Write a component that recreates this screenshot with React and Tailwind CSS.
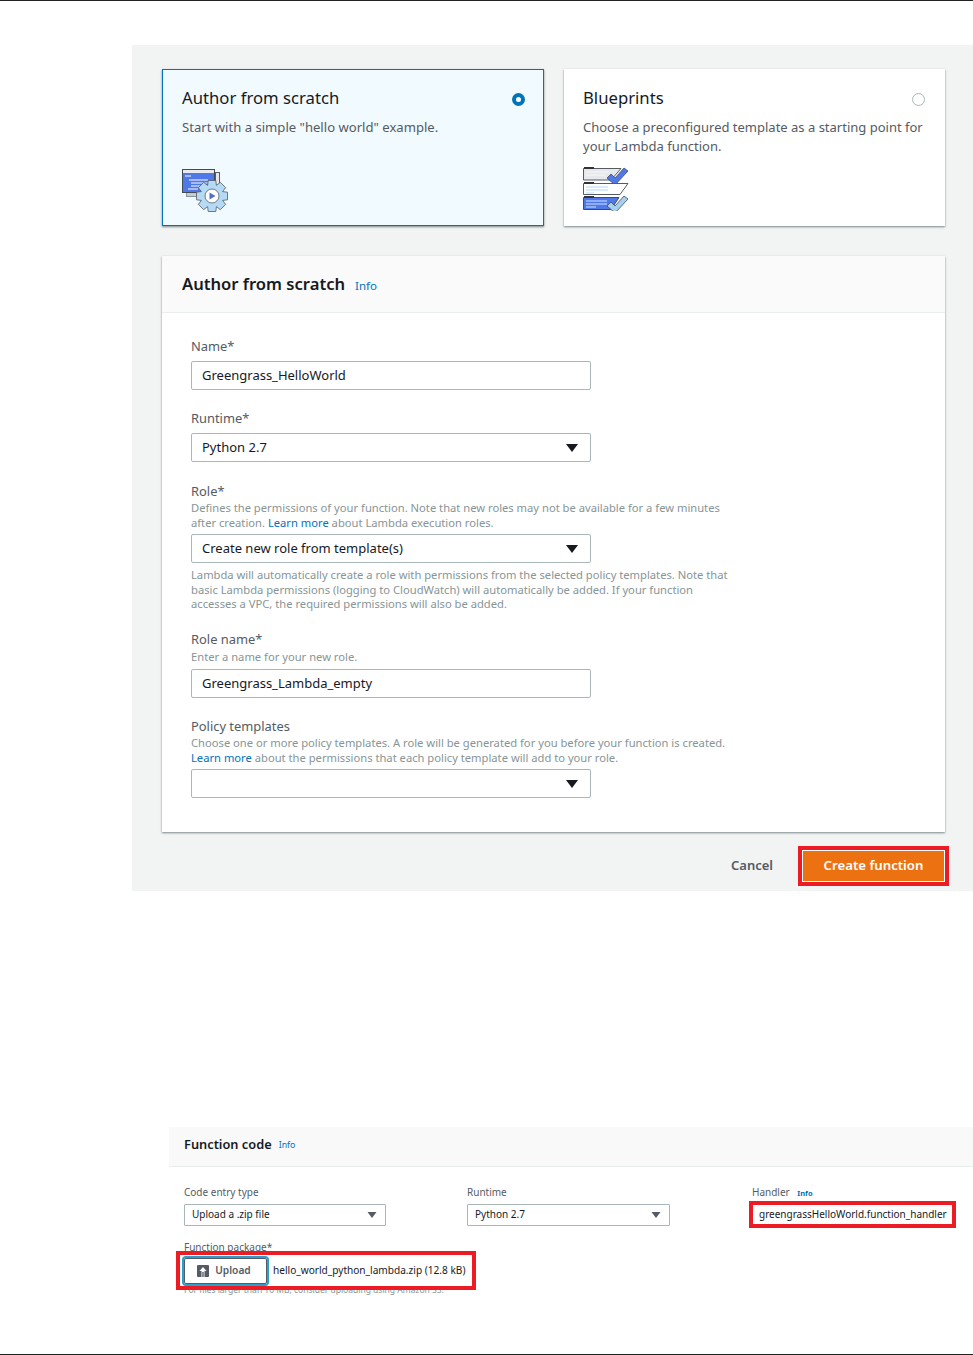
import React from "react";

const FONT = "font-['Noto_Sans','Open_Sans',sans-serif]";

// --- Little helpers ---
const Caret = ({ small }) => (
  <svg width={small ? 10 : 12} height={small ? 6 : 8} viewBox="0 0 12 8" className="shrink-0">
    <path d="M0 0H12L6 8Z" fill={small ? "#545b64" : "#16191f"} />
  </svg>
);

const Field = ({ children, caret }) => (
  <div className="flex h-[29px] w-[400px] items-center justify-between rounded-[2px] border border-[#aab7b8] bg-white pl-[10px] pr-[12px] text-[13px] text-[#16191f]">
    <span>{children}</span>
    {caret && <Caret />}
  </div>
);

const Label = ({ children }) => (
  <div className="text-[12.9px] leading-[16px] text-[#545b64]">{children}</div>
);

const Help = ({ children }) => (
  <p className="text-[11.2px] leading-[14.5px] text-[#879596]">{children}</p>
);

const SmallSelect = ({ children, width }) => (
  <div className={`flex h-[22px] items-center justify-between rounded-[1px] border border-[#aab7b8] bg-white pb-[1px] pl-[7px] pr-[8px] text-[10px] text-[#16191f] ${width}`}>
    <span>{children}</span>
    <Caret small />
  </div>
);

// gear outline for the scratch card icon, 8 teeth round (30,27)
const gearPath = () => {
  const pts = [];
  for (let i = 0; i < 8; i++) {
    const a = (i * Math.PI) / 4;
    [[-0.39, 11.5], [-0.24, 16], [0.24, 16], [0.39, 11.5]].forEach(([d, r]) => {
      pts.push(`${(30 + r * Math.cos(a + d)).toFixed(1)} ${(27 + r * Math.sin(a + d)).toFixed(1)}`);
    });
  }
  return `M${pts.join("L")}Z`;
};

const ScratchIcon = () => (
  <svg width="47" height="44" viewBox="0 0 47 44" className="block">
    <rect x="33.5" y="3.5" width="4" height="14" fill="#e6e8eb" stroke="#545b64" />
    <rect x="4.5" y="23.5" width="20" height="4" fill="#c5ccd2" stroke="#8a9299" />
    <rect x="0.5" y="0.5" width="32" height="23" fill="#4f78e8" stroke="#444b55" />
    <rect x="1" y="1" width="31" height="3" fill="#e8eaec" />
    <path d="M3 7H9M7 11H26M9 14H26M9 17H22M6 20H16" stroke="#fff" strokeWidth="1" />
    <path d={gearPath()} fill="#b5daf5" stroke="#545b64" strokeWidth="0.8" />
    <circle cx="30" cy="27" r="7" fill="#fff" stroke="#545b64" strokeWidth="0.8" />
    <path d="M27.5 23.5v7l6-3.5z" fill="#4f6fc8" />
  </svg>
);

const BlueprintIcon = () => (
  <svg width="47" height="44" viewBox="0 0 47 44" className="block">
    <path d="M0.5 1.5H38L28 13H0.5Z" fill="#e6e8eb" stroke="#545b64" />
    <path d="M1 1H11" stroke="#333" strokeWidth="2" />
    <path d="M3 5H26M3 8H22" stroke="#f6f7f8" />
    <path d="M28 7l4 4 9-10 4 3-13 14-8-7z" fill="#4f78e8" stroke="#3a4a70" strokeWidth="0.8" />
    <path d="M0.5 16.5H45L37 27.5H0.5Z" fill="#fff" stroke="#545b64" />
    <path d="M1 16H11" stroke="#333" strokeWidth="2" />
    <path d="M3 20H25M3 23H25" stroke="#d8edfb" strokeWidth="2" />
    <path d="M3 26H11" stroke="#bcdff7" />
    <path d="M0.5 30.5H36L28 42.5H0.5Z" fill="#4f78e8" stroke="#444b55" />
    <path d="M1 30H11" stroke="#333" strokeWidth="2" />
    <path d="M3 34H24M3 37H24M3 40H13" stroke="#d4e2ff" />
    <path d="M28 35l4 4 9-10 4 3-13 14-8-7z" fill="#a6d0f0" stroke="#444b55" strokeWidth="0.8" />
  </svg>
);

const UploadGlyph = () => (
  <svg width="12" height="12" viewBox="0 0 12 12">
    <rect width="12" height="12" rx="1" fill="#545b64" />
    <path d="M6 2 2.5 6H4.5V12H5.3V7H6.7V12H7.5V6H9.5Z" fill="#fff" />
  </svg>
);

export default function App() {
  return (
    <div className={`${FONT} flex h-[1355px] w-full flex-col justify-between overflow-hidden border-y border-[#222] bg-white`}>
      <div>
        {/* Create function panel */}
        <div className="ml-[132px] mt-[44px] h-[846px] bg-[#f2f3f3] pl-[30px] pr-[28px] pt-[24px]">
          <div className="flex gap-[20px]">
            <div className="relative h-[157px] w-[382px] border border-[#0073bb] bg-[#f1faff] pl-[19px] pt-[16px] shadow-[0_1px_2px_rgba(0,28,36,0.5)]">
              <h2 className="text-[16.7px] leading-[24px] text-[#16191f]">Author from scratch</h2>
              <p className="mt-[8px] text-[13.1px] leading-[19px] text-[#545b64]">Start with a simple "hello world" example.</p>
              <div className="mt-[32px]"><ScratchIcon /></div>
              <span className="absolute right-[18px] top-[23px] flex h-[13px] w-[13px] items-center justify-center rounded-full bg-[#0073bb]">
                <span className="h-[5px] w-[5px] rounded-full bg-white" />
              </span>
            </div>
            <div className="relative h-[157px] w-[381px] bg-white pl-[19px] pt-[17px] shadow-[0_1px_2px_rgba(0,28,36,0.5)]">
              <h2 className="text-[16.7px] leading-[24px] text-[#16191f]">Blueprints</h2>
              <p className="mt-[8px] w-[350px] text-[13px] leading-[19px] text-[#545b64]">Choose a preconfigured template as a starting point for your Lambda function.</p>
              <div className="mt-[11px]"><BlueprintIcon /></div>
              <span className="absolute right-[20px] top-[24px] h-[13px] w-[13px] rounded-full border border-[#aab7b8] bg-white" />
            </div>
          </div>

          {/* Author form */}
          <div className="mt-[30px] h-[576px] w-[783px] bg-white shadow-[0_1px_2px_rgba(0,28,36,0.5)]">
            <div className="flex h-[57px] items-center border-b border-[#eaeded] bg-[#fafafa] pl-[20px]">
              <h3 className="text-[16.6px] font-semibold text-[#16191f]">Author from scratch</h3>
              <a className="ml-[10px] mt-[3px] text-[11.5px] text-[#0073bb]">Info</a>
            </div>
            <div className="pl-[29px] pt-[25px]">
              <Label>Name*</Label>
              <div className="mt-[7px]"><Field>Greengrass_HelloWorld</Field></div>

              <div className="mt-[20px]"><Label>Runtime*</Label></div>
              <div className="mt-[7px]"><Field caret>Python 2.7</Field></div>

              <div className="mt-[21px]"><Label>Role*</Label></div>
              <div className="mt-[2px] w-[542px]">
                <Help>Defines the permissions of your function. Note that new roles may not be available for a few minutes after creation. <span className="text-[#0073bb]">Learn more</span> about Lambda execution roles.</Help>
              </div>
              <div className="mt-[4px]"><Field caret>Create new role from template(s)</Field></div>
              <div className="mt-[5px] w-[542px]">
                <Help>Lambda will automatically create a role with permissions from the selected policy templates. Note that basic Lambda permissions (logging to CloudWatch) will automatically be added. If your function accesses a VPC, the required permissions will also be added.</Help>
              </div>

              <div className="mt-[19px]"><Label>Role name*</Label></div>
              <div className="mt-[3px]"><Help>Enter a name for your new role.</Help></div>
              <div className="mt-[5px]"><Field>Greengrass_Lambda_empty</Field></div>

              <div className="mt-[20px]"><Label>Policy templates</Label></div>
              <div className="mt-[2px] w-[542px]">
                <Help>Choose one or more policy templates. A role will be generated for you before your function is created. <span className="text-[#0073bb]">Learn more</span> about the permissions that each policy template will add to your role.</Help>
              </div>
              <div className="mt-[4px]"><Field caret>&nbsp;</Field></div>
            </div>
          </div>

          {/* Footer actions */}
          <div className="mr-[-4px] mt-[14px] flex items-center justify-end">
            <span className="mr-[25px] text-[13px] font-semibold text-[#545b64]">Cancel</span>
            <div className="border-[4px] border-[#ed1c24] bg-white p-px">
              <div className="flex h-[30px] w-[141px] items-center justify-center bg-[#ec7211] text-[13.2px] font-semibold text-white">Create function</div>
            </div>
          </div>
        </div>

        {/* Function code panel */}
        <div className="ml-[169px] mt-[236px]">
          <div className="flex h-[40px] items-center border-b border-[#eaeded] bg-[#f9f9f9] pb-[4px] pl-[15px]">
            <h3 className="text-[12.8px] font-semibold text-[#16191f]">Function code</h3>
            <a className="ml-[7px] mt-[2px] text-[8.8px] text-[#0073bb]">Info</a>
          </div>
          <div className="flex pl-[15px] pt-[19px]">
            <div className="w-[283px]">
              <div className="text-[10px] leading-[13px] text-[#545b64]">Code entry type</div>
              <div className="mt-[5px]"><SmallSelect width="w-[202px]">Upload a .zip file</SmallSelect></div>
            </div>
            <div className="w-[285px]">
              <div className="text-[10px] leading-[13px] text-[#545b64]">Runtime</div>
              <div className="mt-[5px]"><SmallSelect width="w-[203px]">Python 2.7</SmallSelect></div>
            </div>
            <div>
              <div className="text-[10px] leading-[13px] text-[#545b64]">Handler <span className="ml-[5px] text-[7.5px] font-bold text-[#0073bb]">Info</span></div>
              <div className="ml-[-3px] mt-[1px] flex h-[27px] w-[207px] items-center border-[4px] border-[#ed1c24] bg-white pl-[6px] text-[10px] text-[#16191f]">greengrassHelloWorld.function_handler</div>
            </div>
          </div>
          <div className="pl-[15px] pt-[13px]">
            <div className="text-[10px] leading-[13px] text-[#545b64]">Function package*</div>
            {/* red marker box lies over the label and the note */}
            <div className="relative z-10 -ml-[8px] -mt-[3px] flex h-[39px] w-[300px] items-center border-[4px] border-[#ed1c24] bg-white pl-[4px]">
              <div className="flex h-[26px] w-[83px] items-center justify-center gap-[6px] rounded-[2px] border border-[#545b64] pr-[3px] text-[10.2px] font-semibold text-[#545b64] outline-2 outline-[#2a9fc9]">
                <UploadGlyph />
                Upload
              </div>
              <span className="ml-[6px] whitespace-nowrap text-[10.1px] text-[#16191f]">hello_world_python_lambda.zip (12.8 kB)</span>
            </div>
            <div className="-mt-[6px] text-[8.5px] leading-[12px] text-[#879596]">For files larger than 10 MB, consider uploading using Amazon S3.</div>
          </div>
        </div>
      </div>
    </div>
  );
}
